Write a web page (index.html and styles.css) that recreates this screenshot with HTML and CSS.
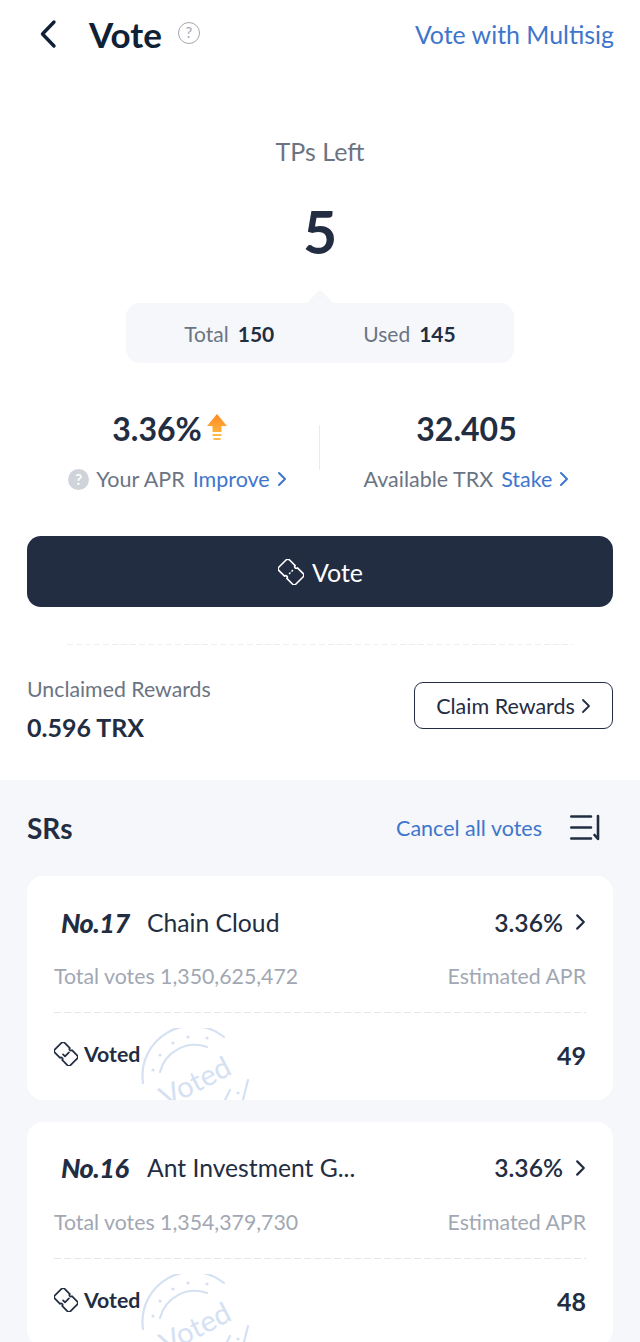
FILE: index.html
```html
<!DOCTYPE html>
<html lang="en">
<head>
<meta charset="utf-8">
<title>Vote</title>
<link rel="stylesheet" href="styles.css">
</head>
<body>
<svg class="defs" width="0" height="0">
  <symbol id="ticket" viewBox="0 0 26 26">
    <g transform="rotate(45 13 13)" fill="none" stroke="currentColor" stroke-width="1.600" stroke-linecap="round" stroke-linejoin="round">
      <path d="M3.500 5.500H11.400a1.600 1.600 0 0 0 3.200 0H22.500a2.500 2.500 0 0 1 2.500 2.500V18a2.500 2.500 0 0 1-2.500 2.500H14.600a1.600 1.600 0 0 0-3.200 0H3.500A2.500 2.500 0 0 1 1 18V8A2.500 2.500 0 0 1 3.500 5.500Z"/>
      <path d="M13 11V11.600M13 14.400V15"/>
    </g>
  </symbol>
  <symbol id="ticket-check" viewBox="0 0 26 26">
    <g transform="rotate(45 13 13)" fill="none" stroke="currentColor" stroke-width="1.900" stroke-linecap="round" stroke-linejoin="round">
      <path d="M3.500 5.500H11.400a1.600 1.600 0 0 0 3.200 0H22.500a2.500 2.500 0 0 1 2.500 2.500V18a2.500 2.500 0 0 1-2.500 2.500H14.600a1.600 1.600 0 0 0-3.200 0H3.500A2.500 2.500 0 0 1 1 18V8A2.500 2.500 0 0 1 3.500 5.500Z"/>
      <path d="M11 15.500H14V9.500"/>
    </g>
  </symbol>
  <symbol id="stamp-art" viewBox="0 0 150 90">
    <g fill="none" stroke="#d5e1f3" stroke-width="2.200" stroke-linecap="round">
      <path d="M29 55A50 50 0 0 1 110 9"/>
      <path d="M46 44A36 36 0 0 1 93 19"/>
      <path d="M134 52 129 72"/>
      <path d="M116 62 111 72"/>
    </g>
    <g fill="#d5e1f3">
      <circle cx="39" cy="42" r="1.600"/><circle cx="46" cy="27" r="1.600"/><circle cx="59" cy="15" r="1.600"/><circle cx="74" cy="9" r="1.600"/><circle cx="93" cy="10" r="1.600"/><circle cx="124" cy="65" r="1.600"/>
    </g>
  </symbol>
</svg>
<div class="page">
  <section class="top">
    <header class="nav">
      <div class="nav-left">
        <svg class="back" viewBox="0 0 18 30"><path d="M15 3 3.500 15 15 27" fill="none" stroke="#0f2136" stroke-width="3.400" stroke-linecap="round" stroke-linejoin="round"/></svg>
        <h1 class="title">Vote</h1>
        <span class="help-outline">?</span>
      </div>
      <a class="link multisig">Vote with Multisig</a>
    </header>

    <div class="tps-label">TPs Left</div>
    <div class="tps-value">5</div>
    <div class="tps-box">
      <span class="tps-item"><span class="muted">Total</span><b>150</b></span>
      <span class="tps-item"><span class="muted">Used</span><b>145</b></span>
    </div>

    <div class="stats">
      <div class="stat">
        <div class="stat-value stat-value-apr">3.36%<svg class="up" viewBox="0 0 20 28"><defs><linearGradient id="upg" x1="0" y1="0" x2="0" y2="1"><stop offset="0" stop-color="#ff8a1f"/><stop offset="1" stop-color="#ffb13d"/></linearGradient></defs><path d="M10 0 20 12H14.500V18H5.500V12H0Z" fill="url(#upg)"/><path d="M5.500 20h9v2h-9zM6.500 24h7v2h-7z" fill="#ffb84a"/></svg></div>
        <div class="stat-label stat-label-apr"><span class="help-solid">?</span><span class="muted">Your APR</span><a class="link">Improve</a><svg class="chev" viewBox="0 0 10 16"><path d="M2 2 8 8 2 14" fill="none" stroke="currentColor" stroke-width="2" stroke-linecap="round" stroke-linejoin="round"/></svg></div>
      </div>
      <div class="stat">
        <div class="stat-value">32.405</div>
        <div class="stat-label"><span class="muted">Available TRX</span><a class="link">Stake</a><svg class="chev" viewBox="0 0 10 16"><path d="M2 2 8 8 2 14" fill="none" stroke="currentColor" stroke-width="2" stroke-linecap="round" stroke-linejoin="round"/></svg></div>
      </div>
    </div>

    <button class="vote-btn"><svg class="ticket-lg"><use href="#ticket"/></svg>Vote</button>
    <div class="dash-top"></div>

    <div class="rewards">
      <div>
        <div class="rewards-label">Unclaimed Rewards</div>
        <div class="rewards-value">0.596 TRX</div>
      </div>
      <button class="claim">Claim Rewards<svg class="chev-dark" viewBox="0 0 10 16"><path d="M2 2 8 8 2 14" fill="none" stroke="currentColor" stroke-width="1.800" stroke-linecap="round" stroke-linejoin="round"/></svg></button>
    </div>
  </section>

  <section class="list">
    <div class="list-head">
      <h2 class="list-title">SRs</h2>
      <div class="list-actions">
        <a class="link cancel">Cancel all votes</a>
        <svg class="sort" viewBox="0 0 30 28"><path d="M1.300 2.500H21M1.300 13.500H21M1.300 24.500H21M28 2V25L24.500 21" fill="none" stroke="#232d42" stroke-width="2.600" stroke-linecap="round" stroke-linejoin="round"/></svg>
      </div>
    </div>

    <article class="card">
      <div class="card-row head-row">
        <div class="sr"><span class="no">No.17</span><span class="name">Chain Cloud</span></div>
        <div class="apr">3.36%<svg class="chev-apr" viewBox="0 0 10 16"><path d="M2 2 8 8 2 14" fill="none" stroke="currentColor" stroke-width="2" stroke-linecap="round" stroke-linejoin="round"/></svg></div>
      </div>
      <div class="card-row sub"><span>Total votes 1,350,625,472</span><span>Estimated APR</span></div>
      <div class="card-dash"></div>
      <div class="card-row voted-row">
        <div class="voted"><svg class="ticket-sm"><use href="#ticket-check"/></svg>Voted</div>
        <div class="count">49</div>
      </div>
      <svg class="stamp" viewBox="0 0 150 90"><use href="#stamp-art"/><text class="stamp-text" transform="translate(52 80) rotate(-27)">Voted</text></svg>
    </article>

    <article class="card">
      <div class="card-row head-row">
        <div class="sr"><span class="no">No.16</span><span class="name">Ant Investment G...</span></div>
        <div class="apr">3.36%<svg class="chev-apr" viewBox="0 0 10 16"><path d="M2 2 8 8 2 14" fill="none" stroke="currentColor" stroke-width="2" stroke-linecap="round" stroke-linejoin="round"/></svg></div>
      </div>
      <div class="card-row sub"><span>Total votes 1,354,379,730</span><span>Estimated APR</span></div>
      <div class="card-dash"></div>
      <div class="card-row voted-row">
        <div class="voted"><svg class="ticket-sm"><use href="#ticket-check"/></svg>Voted</div>
        <div class="count">48</div>
      </div>
      <svg class="stamp" viewBox="0 0 150 90"><use href="#stamp-art"/><text class="stamp-text" transform="translate(52 80) rotate(-27)">Voted</text></svg>
    </article>
  </section>
</div>
</body>
</html>
```

FILE: styles.css
```css
* { box-sizing: border-box; }
html, body { margin: 0; padding: 0; }
body { width: 640px; height: 1342px; overflow: hidden; background: #fff; font-family: Lato, "Open Sans", sans-serif; color: #232d42; }
.defs { position: absolute; }
.page { display: flex; flex-direction: column; height: 1342px; overflow: hidden; }
.top { height: 780px; flex: none; padding: 0 27px; background: #fff; }
.muted { color: #6b7483; }
.link { color: #3e76cd; }

.nav { height: 68px; display: flex; align-items: center; justify-content: space-between; }
.nav-left { display: flex; align-items: center; }
.back { width: 18px; height: 30px; margin-left: 12px; }
.title { margin: 0 0 0 32px; font-size: 35px; font-weight: 700; color: #0f2136; line-height: 44px; }
.help-outline { width: 22px; height: 22px; margin-left: 16px; margin-top: -3px; border: 1.500px solid #a3a8b0; border-radius: 50%; color: #a3a8b0; font-size: 15px; line-height: 19px; text-align: center; }
.multisig { font-size: 24.900px; line-height: 30px; margin-right: -1px; }

.tps-label { margin-top: 68px; height: 30px; text-align: center; font-size: 25px; line-height: 30px; color: #6b7483; }
.tps-value { margin-top: 35px; height: 62px; text-align: center; font-size: 59px; line-height: 62px; font-weight: 700; }
.tps-box { position: relative; margin: 40px auto 0; width: 388px; height: 60px; background: #f5f7fa; border-radius: 14px; display: flex; align-items: center; justify-content: center; gap: 89px; font-size: 21px; }
.tps-box::before { content: ""; position: absolute; left: 182px; top: -10px; width: 24px; height: 24px; background: #f5f7fa; transform: rotate(45deg) scale(.9); border-radius: 4px; }
.tps-item { position: relative; display: flex; gap: 9px; align-items: baseline; }
.tps-item b { font-weight: 700; color: #232d42; }

.stats { margin-top: 39px; display: flex; position: relative; height: 108px; }
.stats::after { content: ""; position: absolute; left: 292px; top: 23px; width: 1px; height: 45px; background: #e9ebef; }
.stat { flex: 1; margin-left: -27px; margin-right: -27px; display: flex; flex-direction: column; align-items: center; }
.stat-value { height: 54px; display: flex; align-items: center; font-size: 32px; font-weight: 700; line-height: 54px; }
.stat-value-apr { margin-right: 8px; }
.up { width: 20px; height: 28px; margin-left: 5px; margin-bottom: 2px; }
.stat-label { margin-top: 2px; height: 42px; display: flex; align-items: center; font-size: 21.500px; }
.stat-label-apr { margin-left: 8px; }
.stat-label .link { margin-left: 8px; }
.help-solid { width: 21px; height: 21px; margin-right: 7px; border-radius: 50%; background: #cfd3da; color: #fff; font-size: 15px; font-weight: 700; line-height: 21px; text-align: center; }
.chev { width: 10px; height: 16px; margin-left: 7px; color: #3e76cd; }

.vote-btn { margin-top: 26px; width: 100%; height: 71px; border: 0; border-radius: 14px; background: #232d42; color: #fff; font-family: inherit; font-size: 25px; display: flex; align-items: center; justify-content: center; gap: 8px; }
.ticket-lg { width: 26px; height: 26px; color: #fff; margin-left: 1px; }
.dash-top { margin: 37px 40px 0; height: 1px; background: repeating-linear-gradient(90deg, #eceef1 0 6px, transparent 6px 9px); }

.rewards { margin-top: 31px; display: flex; justify-content: space-between; align-items: flex-start; }
.rewards-label { font-size: 21.300px; line-height: 26px; color: #6b7483; }
.rewards-value { margin-top: 10px; font-size: 25px; line-height: 30px; font-weight: 700; }
.claim { margin-top: 6px; width: 199px; height: 47px; border: 1.500px solid #232d42; border-radius: 9px; background: #fff; color: #232d42; font-family: inherit; font-size: 21.500px; display: flex; align-items: center; justify-content: center; gap: 6px; padding: 0; }
.chev-dark { width: 10px; height: 16px; }

.list { flex: 1; background: #f5f7fa; padding: 0 27px; overflow: hidden; }
.list-head { height: 96px; display: flex; align-items: center; justify-content: space-between; }
.list-title { margin: 0; font-size: 28px; font-weight: 700; }
.list-actions { display: flex; align-items: center; gap: 28px; margin-right: 13px; }
.cancel { font-size: 21.500px; }
.sort { width: 30px; height: 28px; }

.card { height: 224px; margin-bottom: 21.500px; padding: 28px 27px 0; background: #fff; border-radius: 16px; overflow: hidden; position: relative; }
.card-row { display: flex; justify-content: space-between; align-items: center; }
.head-row { height: 36px; }
.sr { display: flex; align-items: center; }
.no { width: 93px; padding-left: 7px; font-size: 27px; font-weight: 900; font-style: italic; letter-spacing: -.5px; }
.name { font-size: 24.700px; }
.apr { display: flex; align-items: center; font-size: 24.700px; font-weight: 600; gap: 12px; }
.chev-apr { width: 11px; height: 18px; }
.sub { height: 30px; margin-top: 21px; font-size: 21.300px; color: #a2a8b3; }
.card-dash { margin-top: 21px; height: 1px; background: repeating-linear-gradient(90deg, #e3e6ea 0 7px, transparent 7px 10px); }
.voted-row { height: 84px; }
.voted { display: flex; align-items: center; gap: 6px; font-size: 21.300px; font-weight: 700; margin-top: -2px; }
.ticket-sm { width: 24px; height: 24px; color: #232d42; }
.count { font-size: 25px; font-weight: 700; }
.stamp { position: absolute; left: 87px; top: 152px; width: 150px; height: 90px; }
.stamp-text { font-family: Lato, sans-serif; font-size: 29px; fill: #d5e1f3; }
```
